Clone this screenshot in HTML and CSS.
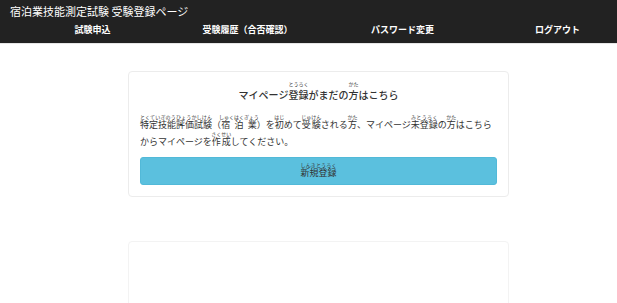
FILE: index.html
```html
<!DOCTYPE html>
<html lang="ja">
<head>
  <meta charset="utf-8">
  <title>宿泊業技能測定試験 受験登録ページ</title>
  <link rel="stylesheet" href="styles.css">
</head>
<body>

  <header class="topbar">
    <div class="site-title">宿泊業技能測定試験 受験登録ページ</div>
    <nav class="nav">
      <a href="#">試験申込</a>
      <a href="#">受験履歴（合否確認）</a>
      <a href="#">パスワード変更</a>
      <a href="#">ログアウト</a>
    </nav>
  </header>

  <div class="main">
    <div class="card">
      <h3 class="card-title">マイページ<ruby>登録<rt>とうろく</rt></ruby>がまだの<ruby>方<rt>かた</rt></ruby>はこちら</h3>
      <p class="lead">
        <ruby>特定技能評価試験<rt>とくていぎのうひょうかしけん</rt></ruby>（<ruby>宿泊業<rt>しゅくはくぎょう</rt></ruby>）を<ruby>初<rt>はじ</rt></ruby>めて<ruby>受験<rt>じゅけん</rt></ruby>される<ruby>方<rt>かた</rt></ruby>、マイページ<ruby>未登録<rt>みとうろく</rt></ruby>の<ruby>方<rt>かた</rt></ruby>はこちら<br>からマイページを<ruby>作成<rt>さくせい</rt></ruby>してください。
      </p>
      <a class="btn-info" href="#"><ruby>新規登録<rt>しんきとうろく</rt></ruby></a>
    </div>

    <div class="card card-empty"></div>
  </div>

</body>
</html>
```

FILE: styles.css
```css
html, body {
  overflow: hidden;
}

body {
  margin: 0;
  font-family: "Noto Sans CJK JP", "Noto Sans", sans-serif;
  color: #333;
  background-color: #fff;
}

.topbar {
  background-color: #222;
  height: 43px;
  border-bottom: 1px solid #e6e6e6;
  overflow: hidden;
}

.site-title {
  color: #fff;
  font-size: 11px;
  line-height: 14px;
  padding: 4px 10px 0;
  white-space: nowrap;
}

.nav {
  display: grid;
  grid-template-columns: repeat(4, 155px);
  padding-left: 15px;
  margin-top: 1px;
  width: 640px;
}

.nav a {
  color: #fff;
  text-decoration: none;
  text-align: center;
  font-size: 9px;
  font-weight: bold;
  line-height: 22px;
  white-space: nowrap;
}

.main {
  width: 381px;
  margin: 27px 0 0 128px;
}

.card {
  box-sizing: border-box;
  border: 1px solid #ececec;
  border-radius: 4px;
  padding: 6px 11px 11px;
}

.card-title {
  margin: 2px 0 0;
  font-size: 10px;
  font-weight: 500;
  line-height: 18px;
  text-align: center;
}

rt {
  font-size: 5px;
  font-weight: normal;
}

.card-title rt {
  padding-bottom: 3px;
}

.lead {
  margin: 10px 0 7px;
  font-size: 9px;
  line-height: 17px;
  white-space: nowrap;
}

.btn-info {
  display: block;
  height: 28px;
  box-sizing: border-box;
  line-height: 30px;
  background-color: #5bc0de;
  border: 1px solid #52b9d8;
  border-radius: 3px;
  color: #333;
  text-align: center;
  font-size: 9px;
  text-decoration: none;
}

.card-empty {
  margin-top: 44px;
  height: 80px;
  border-color: #f3f3f3;
}
```
